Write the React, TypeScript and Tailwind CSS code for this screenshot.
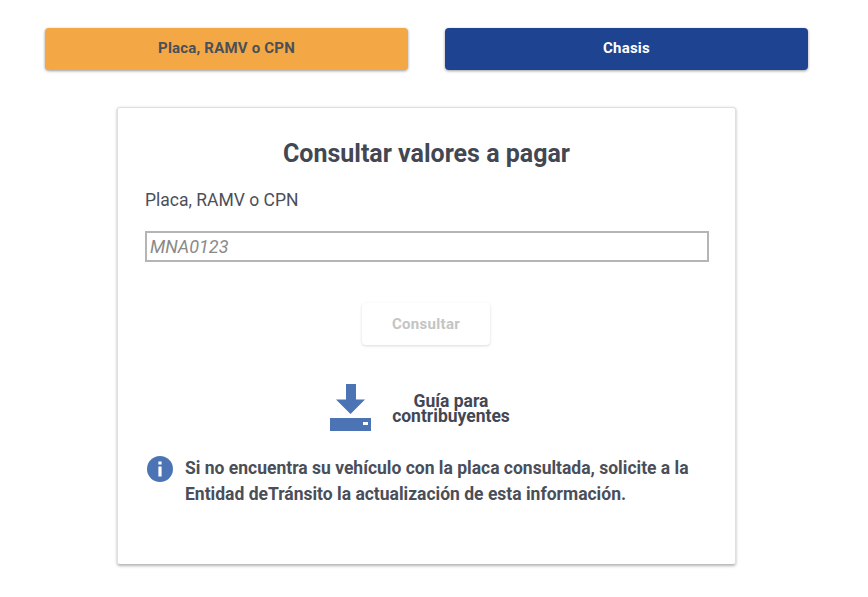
export default function App() {
  return (
    <div className="w-[868px] h-[597px] overflow-hidden bg-white font-['Roboto',sans-serif] text-[#434753]">
      <div className="flex gap-[37px] pl-[45px] pt-[28px]">
        <button className="w-[363px] h-[42px] pb-[1px] rounded-[4px] bg-[#f3a845] text-[15px] tracking-[0.2px] font-bold text-[#4a5058] shadow-[0_1px_3px_rgba(0,0,0,0.4)]">
          Placa, RAMV o CPN
        </button>
        <button className="w-[363px] h-[42px] pb-[1px] rounded-[4px] bg-[#1e4391] text-[15px] tracking-[0.2px] font-bold text-white shadow-[0_1px_3px_rgba(0,0,0,0.4)]">
          Chasis
        </button>
      </div>

      <div className="ml-[117px] mt-[37px] w-[619px] h-[458px] rounded-[3px] border border-[#e0e0e0] border-b-[#bdbdbd] shadow-[0_1px_3px_rgba(0,0,0,0.3)] px-[27px]">
        <h1 className="mt-[31px] text-center text-[25px] leading-[30px] font-bold">Consultar valores a pagar</h1>
        <div className="mt-[20px] text-[17.5px] leading-[22px] text-[#4b4f5a]">Placa, RAMV o CPN</div>
        <input
          placeholder="MNA0123"
          className="mt-[20px] block w-[564px] h-[31px] border-2 border-[#b5b5b5] px-[3px] text-[18px] italic outline-none placeholder:text-[#8a8a8a]"
        />
        <div className="mt-[41px] flex justify-center">
          <button className="w-[128px] mr-[1px] h-[42px] rounded-[4px] bg-white text-[15px] tracking-[0.3px] font-bold text-[#c4c4c4] shadow-[0_1px_3px_rgba(0,0,0,0.15)]">
            Consultar
          </button>
        </div>
        <div className="mt-[39px] flex items-center pl-[185px]">
          <svg width="41" height="47" viewBox="0 0 41 47" className="block">
            <path d="M16 0h10v15.5h9L20.5 30 6 15.5h10z" fill="#4c74b5" />
            <path d="M0 34h41v13H0z" fill="#4c74b5" />
            <path d="M33 38h5v3h-5z" fill="#ffffff" />
          </svg>
          <div className="ml-[21px] mt-[2px] w-[118px] text-center text-[17.5px] leading-[15px] font-bold">
            <div>Guía para</div>
            <div>contribuyentes</div>
          </div>
        </div>
        <div className="mt-[24px] flex items-start">
          <svg width="26" height="26" viewBox="0 0 26 26" className="mt-[1px] ml-[2px] shrink-0">
            <circle cx="13" cy="13" r="13" fill="#4c74b5" />
            <path d="M11.4 5.5h3.2v3h-3.2zM11.4 10.5h3.2v10h-3.2z" fill="#fff" />
          </svg>
          <p className="ml-[12px] text-[17.5px] leading-[26px] font-bold text-[#4a4e59]">
            Si no encuentra su vehículo con la placa consultada, solicite a la
            <br />
            Entidad deTránsito la actualización de esta información.
          </p>
        </div>
      </div>
    </div>
  )
}
